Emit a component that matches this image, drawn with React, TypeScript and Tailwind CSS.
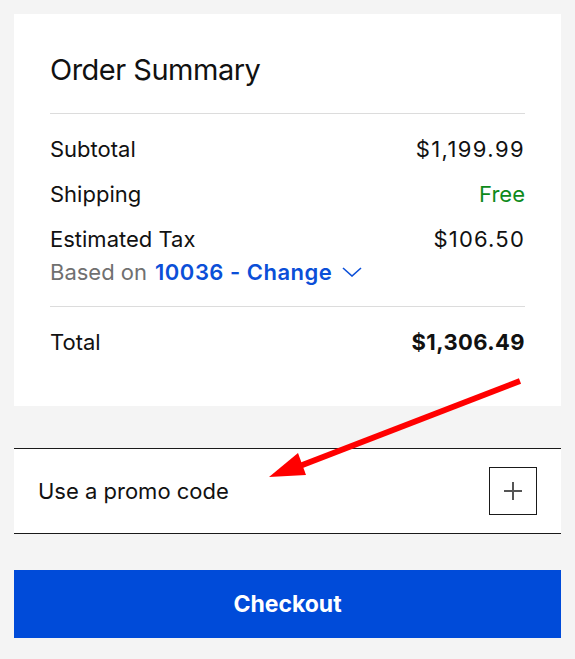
export default function App() {
  return (
    <div className="relative min-h-[659px] bg-[#f4f4f4] px-[14px] pt-[14px] pb-5 font-['Inter','Liberation_Sans',sans-serif] text-[#111]">
      {/* Summary card */}
      <div className="bg-white px-9 pt-[38px] pb-[50px]">
        <h2 className="text-[29px] leading-9 tracking-[-0.5px]">Order Summary</h2>
        <div className="mt-[25px] border-t border-[#dcdcdc]" />

        <div className="mt-[21px] flex items-center justify-between text-[22px] leading-7">
          <span>Subtotal</span>
          <span className="tracking-[1.4px]">$1,199.99</span>
        </div>
        <div className="mt-[17px] flex items-center justify-between text-[22px] leading-7">
          <span>Shipping</span>
          <span className="text-[#0d8a1a]">Free</span>
        </div>
        <div className="mt-[17px] flex items-center justify-between text-[22px] leading-7">
          <span>Estimated Tax</span>
          <span className="tracking-[1.2px]">$106.50</span>
        </div>
        <div className="mt-[5px] flex items-center text-[22px] leading-7">
          <span className="text-[#707070]">Based on</span>
          <button className="ml-[8px] flex items-center font-semibold tracking-[0.5px] text-[#0b4fd8]">
            10036 - Change
            <svg viewBox="0 0 20 10" className="ml-[10px] h-[10px] w-[20px]" fill="none" stroke="currentColor" strokeWidth="1.6">
              <path d="M1 1l9 8 9-8" />
            </svg>
          </button>
        </div>
        <div className="mt-[20px] border-t border-[#dcdcdc]" />

        <div className="mt-[21px] flex items-center justify-between text-[22px] leading-7">
          <span>Total</span>
          <span className="font-bold tracking-[0.4px]">$1,306.49</span>
        </div>
      </div>

      {/* Promo code */}
      <div className="mt-[42px] flex h-[86px] items-center justify-between border-y border-[#1a1a1a] bg-white pl-6 pr-6">
        <span className="text-[22px]">Use a promo code</span>
        <button className="flex h-12 w-12 items-center justify-center border border-[#1a1a1a]">
          <svg viewBox="0 0 18 18" className="h-[18px] w-[18px]" stroke="#555" strokeWidth="2">
            <path d="M9 0v18M0 9h18" />
          </svg>
        </button>
      </div>

      <button className="mt-9 flex h-[68px] w-full items-center justify-center bg-[#004bd9] text-[23px] font-bold text-white">
        Checkout
      </button>

      {/* Annotation arrow */}
      <svg className="pointer-events-none absolute left-0 top-0" width="575" height="659">
        <line x1="520" y1="381" x2="292" y2="469" stroke="#ff0000" strokeWidth="6" />
        <polygon points="269,477 298,453 306,475" fill="#ff0000" />
      </svg>
    </div>
  );
}
